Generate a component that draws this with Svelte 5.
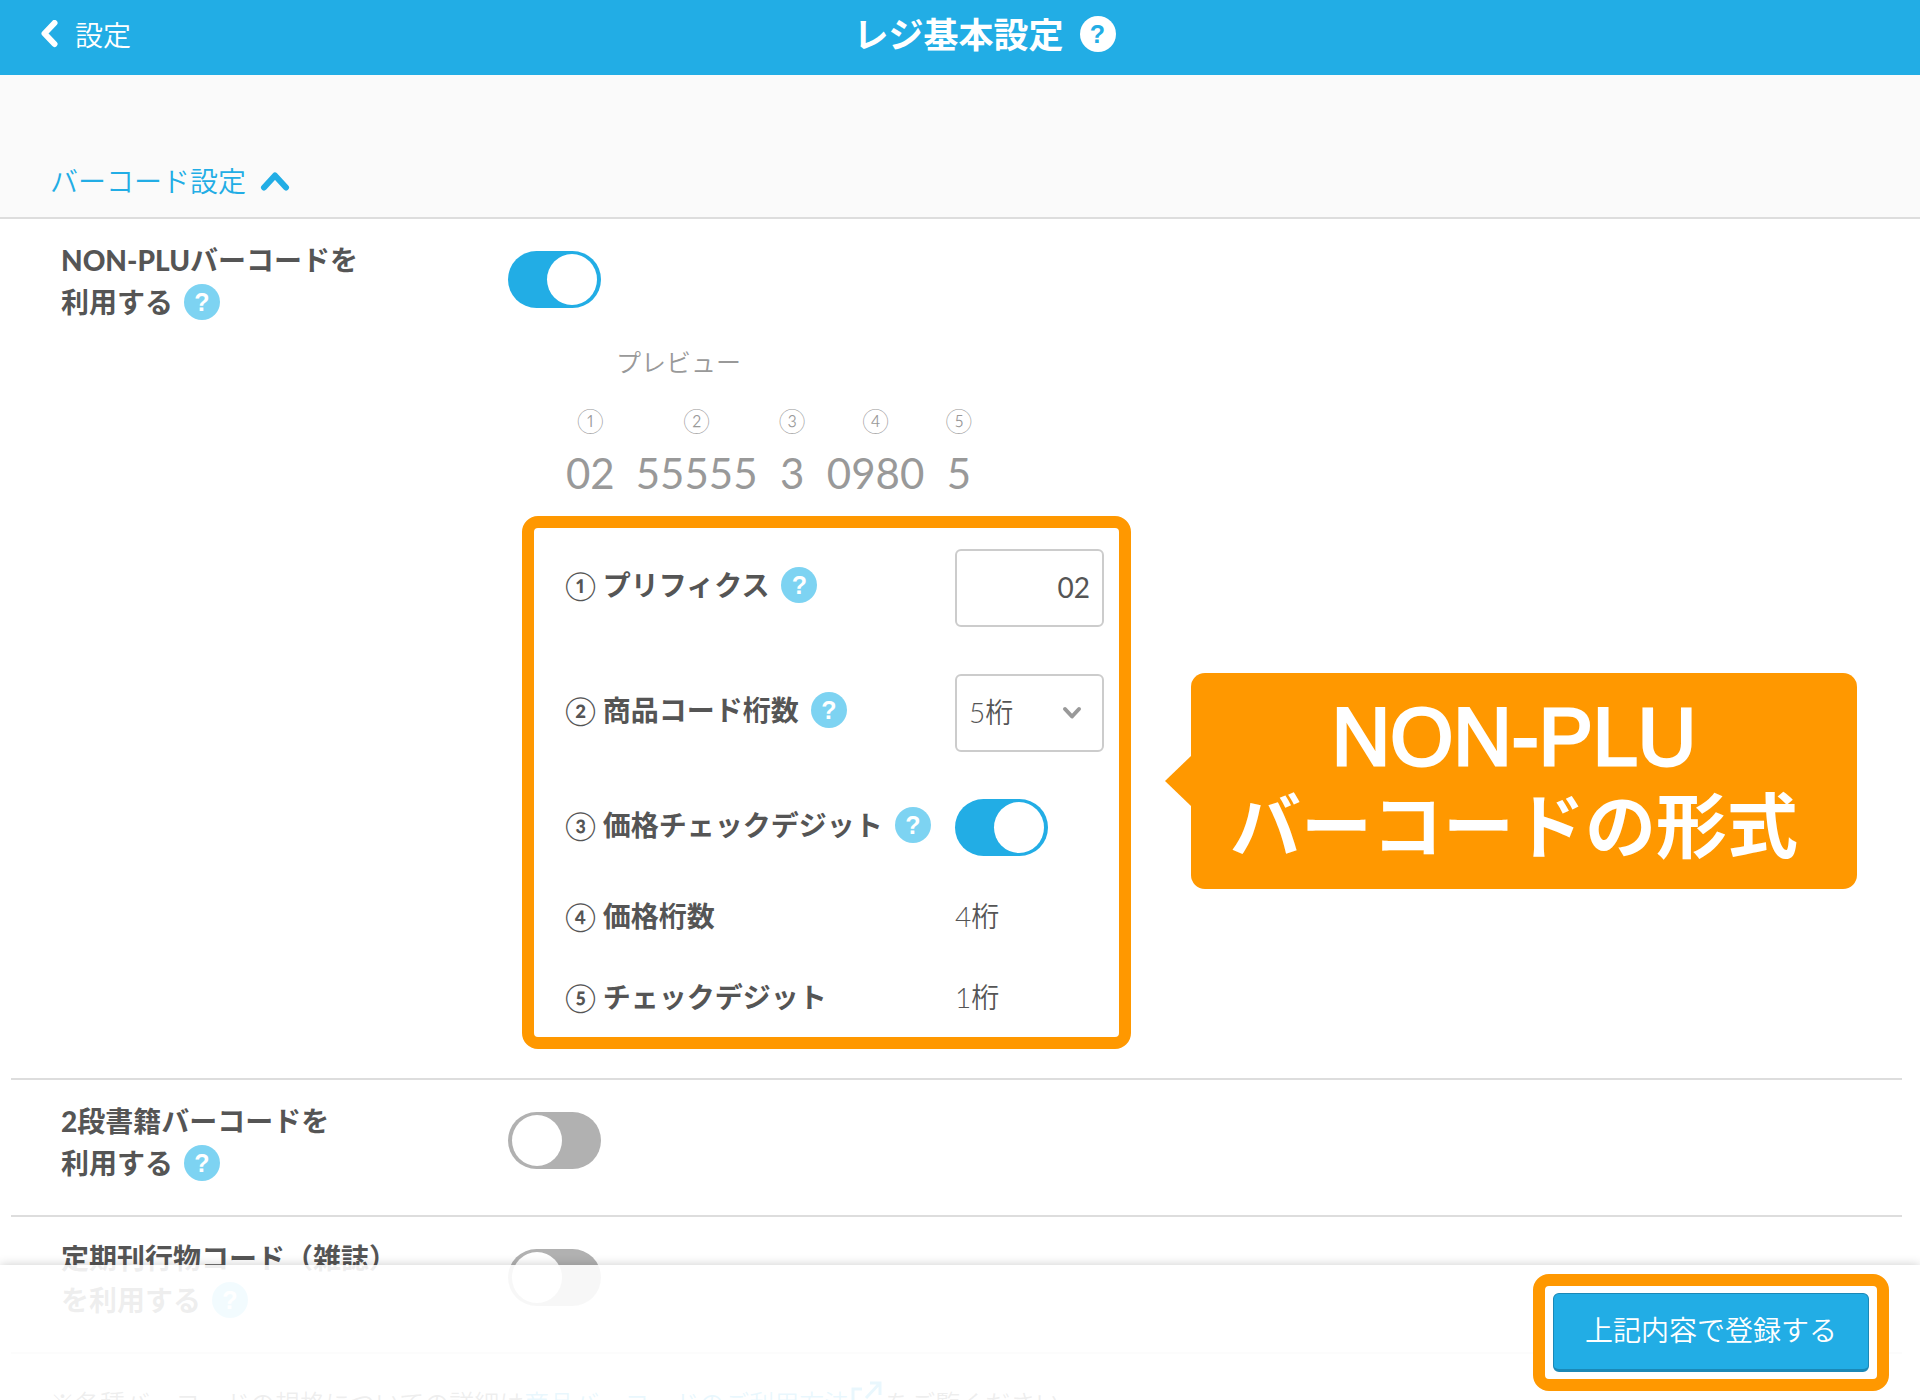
<script lang="ts">
    type Part = { mark: string; digits: string };

    const digitOptions = [4, 5, 6];

    let prefix = $state("02");
    let codeDigits = $state(5);
    let nonPlu = $state(true);
    let priceCheck = $state(true);
    let bookBarcode = $state(false);
    let magazineCode = $state(false);

    let parts: Part[] = $derived([
        { mark: "①", digits: prefix },
        { mark: "②", digits: "5".repeat(codeDigits) },
        { mark: "③", digits: "3" },
        { mark: "④", digits: "0980" },
        { mark: "⑤", digits: "5" },
    ]);
</script>

{#snippet help(name: string)}
    <button type="button" class="help" aria-label="{name}のヘルプ">?</button>
{/snippet}

<div class="page">
    <header class="topbar">
        <a class="back" href="#settings">
            <svg width="18" height="30" viewBox="0 0 18 30" aria-hidden="true">
                <path d="M14.5 3 L4.5 13.5 L14.5 24" />
            </svg>
            設定
        </a>
        <div class="title">
            <h1>レジ基本設定</h1>
            {@render help("レジ基本設定")}
        </div>
    </header>

    <main>
        <div class="section-head">
            <button type="button" class="section-toggle" aria-expanded="true">
                バーコード設定
                <svg width="30" height="22" viewBox="0 0 30 22" aria-hidden="true">
                    <path d="M4 17.5 L15 5.5 L26 17.5" />
                </svg>
            </button>
        </div>

        <section class="row">
            <div class="name">
                <label for="non-plu"><span class="heavy">NON-PLU</span>バーコードを<br />利用する</label>
                {@render help("NON-PLUバーコード")}
            </div>
            <div>
                <input id="non-plu" class="switch" type="checkbox" role="switch" bind:checked={nonPlu} />

                <div class="preview">
                    <p>プレビュー</p>
                    <div class="parts">
                        {#each parts as part (part.mark)}
                            <div class="part">
                                <span class="mark">{part.mark}</span>
                                <span class="digits">{part.digits}</span>
                            </div>
                        {/each}
                    </div>
                </div>

                <div class="format">
                    <div class="frame fields">
                        <div class="field-name boxed">
                            <label for="prefix"><span class="num">①</span> プリフィクス</label>
                            {@render help("プリフィクス")}
                        </div>
                        <input id="prefix" class="box" type="text" bind:value={prefix} />

                        <div class="field-name boxed">
                            <label for="code-digits"><span class="num">②</span> 商品コード桁数</label>
                            {@render help("商品コード桁数")}
                        </div>
                        <div class="select">
                            <select id="code-digits" class="box" bind:value={codeDigits}>
                                {#each digitOptions as n (n)}
                                    <option value={n}>{n}桁</option>
                                {/each}
                            </select>
                            <svg width="20" height="16" viewBox="0 0 20 16" aria-hidden="true">
                                <path d="M3 4 L10 11.5 L17 4" />
                            </svg>
                        </div>

                        <div class="field-name switched">
                            <label for="price-check"><span class="num">③</span> 価格チェックデジット</label>
                            {@render help("価格チェックデジット")}
                        </div>
                        <input id="price-check" class="switch" type="checkbox" role="switch" bind:checked={priceCheck} />

                        <div class="field-name"><span><span class="num">④</span> 価格桁数</span></div>
                        <div>4桁</div>

                        <div class="field-name"><span><span class="num">⑤</span> チェックデジット</span></div>
                        <div>1桁</div>
                    </div>

                    <div class="balloon">
                        <span class="latin">NON-PLU</span>
                        <span>バーコードの形式</span>
                    </div>
                </div>
            </div>
        </section>

        <section class="row">
            <div class="name">
                <label for="book-barcode"><span class="heavy">2</span>段書籍バーコードを<br />利用する</label>
                {@render help("2段書籍バーコード")}
            </div>
            <input id="book-barcode" class="switch" type="checkbox" role="switch" bind:checked={bookBarcode} />
        </section>

        <section class="row">
            <div class="name">
                <label for="magazine-code">定期刊行物コード（雑誌）<br />を利用する</label>
                {@render help("定期刊行物コード")}
            </div>
            <input id="magazine-code" class="switch" type="checkbox" role="switch" bind:checked={magazineCode} />
        </section>

        <p class="note">
            ※各種バーコードの規格についての詳細は<a href="#barcode-guide"
                >商品バーコードのご利用方法<svg width="32" height="32" viewBox="0 0 32 32" aria-hidden="true">
                    <path d="M12 8 H3 V30 H24 V20 M16 17 L30 2 M20 2 H30 V14" />
                </svg></a
            >をご覧ください
        </p>
    </main>

    <footer>
        <div class="frame">
            <button type="button" class="submit">上記内容で登録する</button>
        </div>
    </footer>
</div>

<style>
    :global(body) {
        margin: 0;
    }

    .page {
        --blue: #22ade5;
        --blue-dark: #1b88b6;
        --blue-light: #7dd3f2;
        --orange: #ff9800;
        --line: #ddd;
        --text: #555;
        position: relative;
        display: flex;
        flex-direction: column;
        height: 100vh;
        overflow: hidden;
        background: #fff;
        color: var(--text);
        font-family: Lato, "Noto Sans CJK JP", sans-serif;
        font-size: 28px;
        font-weight: 350;
        line-height: 42px;
    }

    .page *,
    .page *::before {
        box-sizing: border-box;
    }

    button,
    input,
    select {
        margin: 0;
        font: inherit;
        color: inherit;
        cursor: pointer;
    }

    p,
    h1 {
        margin: 0;
    }

    svg {
        flex: none;
        fill: none;
        stroke: currentColor;
        stroke-linecap: round;
        stroke-linejoin: round;
    }

    .topbar {
        display: grid;
        grid-template-columns: 1fr auto 1fr;
        align-items: center;
        flex: none;
        height: 75px;
        padding: 0 40px 6px;
        background: var(--blue);
        color: #fff;
    }

    .back {
        display: flex;
        align-items: center;
        gap: 17px;
        color: inherit;
        text-decoration: none;
    }

    .back svg {
        stroke-width: 6;
    }

    .title {
        display: flex;
        align-items: center;
        gap: 16px;
        padding: 0 0 2px 49px;
    }

    h1 {
        font-size: 35px;
        font-weight: 700;
        line-height: 42px;
    }

    .help {
        display: inline-flex;
        align-items: center;
        justify-content: center;
        width: 36px;
        height: 36px;
        padding: 0;
        border: 0;
        border-radius: 50%;
        background: var(--blue-light);
        color: #fff;
        font-family: "Liberation Sans", sans-serif;
        font-size: 25px;
        font-weight: 700;
        line-height: 36px;
    }

    .topbar .help {
        background: #fff;
        color: var(--blue);
    }

    main {
        flex: 1;
        min-height: 0;
        overflow: hidden;
    }

    .section-head {
        padding: 85px 50px 15px;
        border-bottom: 2px solid var(--line);
        background: #fafafa;
    }

    .section-toggle {
        display: flex;
        align-items: center;
        gap: 14px;
        padding: 0;
        border: 0;
        background: none;
        color: var(--blue);
    }

    .section-toggle svg {
        stroke-width: 6;
    }

    .row {
        display: grid;
        grid-template-columns: 447px 1fr;
        align-items: start;
        margin: 0 18px 0 11px;
        padding: 20px 0 29px 50px;
        border-bottom: 2px solid var(--line);
    }

    .name {
        padding-bottom: 2px;
    }

    .name,
    .field-name {
        font-weight: 700;
    }

    .name .help {
        margin: 3px 0 0 4px;
        vertical-align: top;
    }

    .heavy {
        font-weight: 900;
    }

    .switch {
        appearance: none;
        display: block;
        width: 93px;
        height: 57px;
        padding: 3px 4px;
        border-radius: 29px;
        background: #b1b1b1;
    }

    .switch::before {
        content: "";
        display: block;
        width: 50px;
        height: 51px;
        border-radius: 50%;
        background: #fff;
    }

    .switch:checked {
        background: var(--blue);
    }

    .switch:checked::before {
        margin-left: auto;
    }

    .row > .switch,
    .row > div > .switch {
        margin-top: 12px;
    }

    .preview {
        padding: 33px 0 0 58px;
        color: #999;
    }

    .preview p {
        padding-left: 50px;
        font-size: 25px;
    }

    .parts {
        display: flex;
        gap: 21px;
        padding-top: 16px;
    }

    .part {
        display: flex;
        flex-direction: column;
        align-items: center;
    }

    .mark {
        font-size: 25px;
    }

    .digits {
        font-size: 42px;
        font-weight: 400;
        line-height: 65px;
    }

    .format {
        display: flex;
        align-items: center;
        gap: 60px;
        margin: 10px 0 0 14px;
    }

    .frame {
        border: 12px solid var(--orange);
        border-radius: 16px;
    }

    .fields {
        display: grid;
        grid-template-columns: 390px 149px;
        row-gap: 39px;
        align-items: center;
        padding: 21px 15px 19px 31px;
    }

    .field-name {
        display: flex;
        align-items: center;
        gap: 12px;
        white-space: nowrap;
    }

    .field-name.boxed {
        padding-bottom: 14px;
    }

    .field-name.switched {
        padding-bottom: 5px;
    }

    .num {
        font-weight: 500;
    }

    .box {
        display: block;
        width: 149px;
        height: 78px;
        padding: 0 12px 2px;
        border: 2px solid #ccc;
        border-radius: 6px;
        background: #fff;
    }

    input.box {
        margin-bottom: 8px;
        font-weight: 400;
        text-align: right;
    }

    .select {
        display: grid;
        align-items: center;
        margin-bottom: 8px;
    }

    .select > * {
        grid-area: 1 / 1;
    }

    .select svg {
        justify-self: end;
        margin-right: 22px;
        color: #999;
        stroke-width: 4;
        pointer-events: none;
    }

    select {
        appearance: none;
    }

    .balloon {
        position: relative;
        display: flex;
        flex-direction: column;
        align-items: center;
        justify-content: center;
        width: 666px;
        height: 216px;
        margin-bottom: 4px;
        padding-right: 20px;
        border-radius: 14px;
        background: var(--orange);
        color: #fff;
        font-size: 71px;
        font-weight: 700;
        line-height: 88px;
        white-space: nowrap;
    }

    .balloon::before {
        content: "";
        position: absolute;
        top: 83px;
        right: 100%;
        border: solid transparent;
        border-width: 25px 26px 25px 0;
        border-right-color: var(--orange);
    }

    .latin {
        font-family: "Liberation Sans", sans-serif;
        font-size: 81px;
        font-weight: 400;
        -webkit-text-stroke: 3px #fff;
    }

    .note {
        padding: 27px 50px;
        font-size: 25px;
    }

    .note a {
        color: var(--blue);
        text-decoration: none;
    }

    .note svg {
        margin: 0 3px 0 1px;
        stroke-width: 3;
        stroke-linecap: butt;
        stroke-linejoin: miter;
    }

    footer {
        position: absolute;
        right: 0;
        bottom: 0;
        left: 0;
        display: flex;
        justify-content: flex-end;
        padding: 9px 31px;
        background: rgba(255, 255, 255, 0.9);
        box-shadow: 0 0 10px rgba(0, 0, 0, 0.2);
    }

    footer .frame {
        padding: 7px 8px;
        background: #fff;
    }

    .submit {
        display: block;
        height: 79px;
        padding: 0 31px 4px;
        border: 1px solid var(--blue-dark);
        border-bottom-width: 3px;
        border-radius: 6px;
        background: var(--blue);
        color: #fff;
    }
</style>
